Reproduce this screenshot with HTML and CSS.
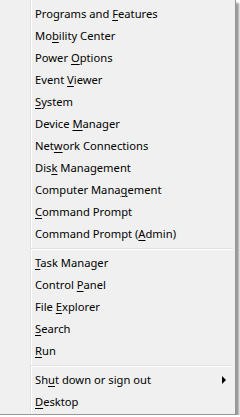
FILE: index.html
```html
<!DOCTYPE html>
<html>

<head>
    <title>Quick Link Menu</title>
    <link rel="stylesheet" href="styles.css">
</head>

<body>
    <div class="menu">
        <ul class="group">
            <li class="item">Programs and <u>F</u>eatures</li>
            <li class="item">Mo<u>b</u>ility Center</li>
            <li class="item">Power <u>O</u>ptions</li>
            <li class="item">Event <u>V</u>iewer</li>
            <li class="item"><u>S</u>ystem</li>
            <li class="item">Device <u>M</u>anager</li>
            <li class="item">Net<u>w</u>ork Connections</li>
            <li class="item">Dis<u>k</u> Management</li>
            <li class="item">Computer Mana<u>g</u>ement</li>
            <li class="item"><u>C</u>ommand Prompt</li>
            <li class="item">Command Prompt (<u>A</u>dmin)</li>
        </ul>
        <div class="separator"></div>
        <ul class="group">
            <li class="item"><u>T</u>ask Manager</li>
            <li class="item">Control <u>P</u>anel</li>
            <li class="item">File <u>E</u>xplorer</li>
            <li class="item"><u>S</u>earch</li>
            <li class="item"><u>R</u>un</li>
        </ul>
        <div class="separator"></div>
        <ul class="group">
            <li class="item submenu">Sh<u>u</u>t down or sign out</li>
            <li class="item"><u>D</u>esktop</li>
        </ul>
    </div>
</body>

</html>
```
FILE: styles.css
```css
body {
    margin: 0;
    background: #ffffff;
    font-family: 'Noto Sans', sans-serif;
    font-size: 11.2px;
    color: #000000;
}

.menu {
    width: 235px;
    padding: 3px 0 1px;
    background: linear-gradient(to right, #f0f0f0 30px, #e2e3e3 30px, #e2e3e3 31px, #ffffff 31px, #ffffff 32px, #f0f0f0 32px);
    border-right: 1px solid #979797;
    border-bottom: 1px solid #979797;
    box-shadow: 3px 3px 2px rgba(0, 0, 0, 0.4);
}

.group {
    list-style: none;
    margin: 0;
    padding: 0;
}

.item {
    position: relative;
    height: 22px;
    line-height: 22px;
    padding-left: 35px;
    white-space: nowrap;
}

.item u {
    text-underline-offset: 2px;
}

.submenu::after {
    content: '';
    position: absolute;
    right: 9px;
    top: 7px;
    border-top: 4px solid transparent;
    border-bottom: 4px solid transparent;
    border-left: 4px solid #000000;
}

.separator {
    height: 7px;
    margin-left: 31px;
    margin-right: 2px;
    background: linear-gradient(to bottom, transparent 3px, #e0e0e0 3px, #e0e0e0 4px, #ffffff 4px, #ffffff 5px, transparent 5px);
}
```
